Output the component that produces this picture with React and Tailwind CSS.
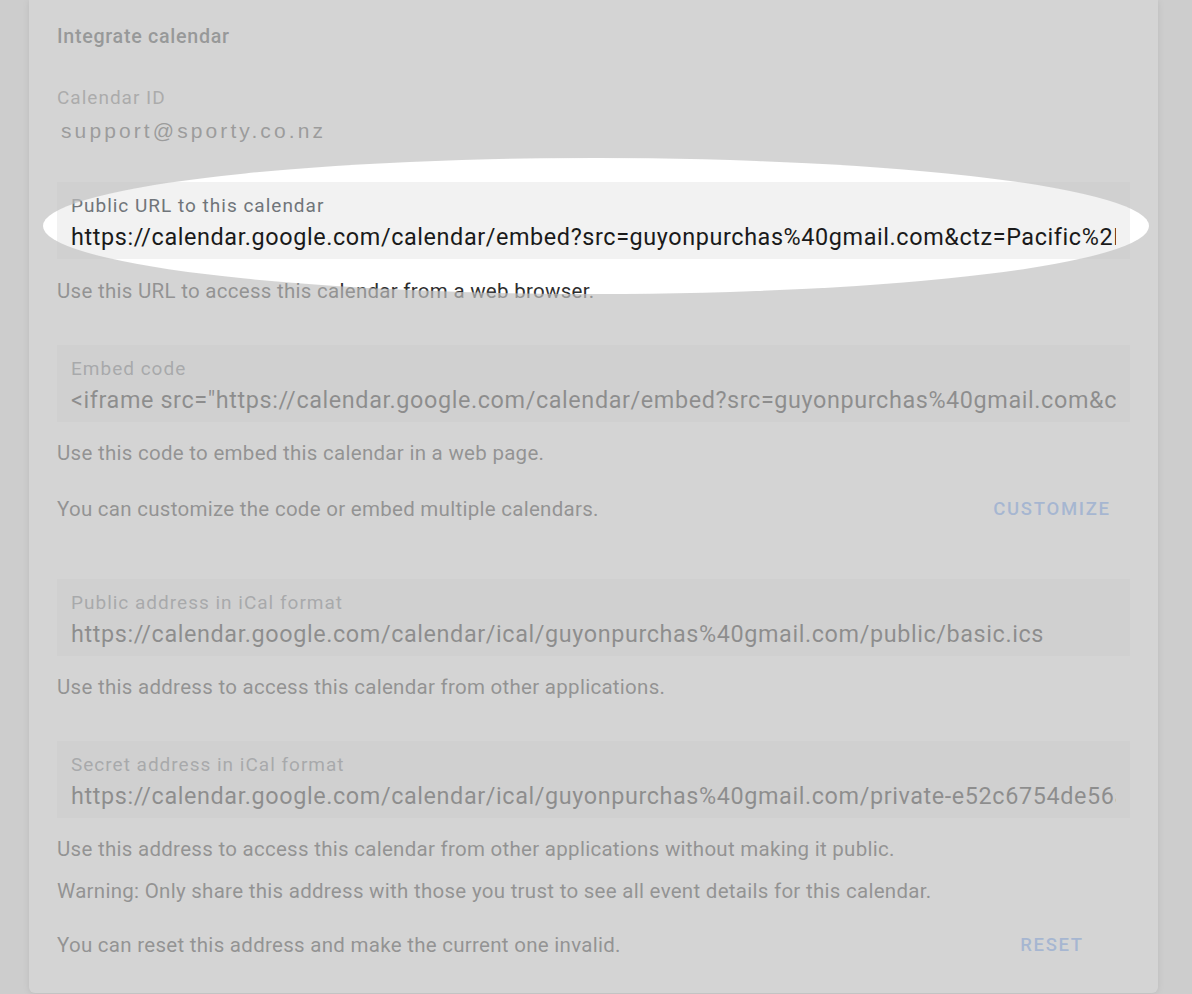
import React from 'react'

const fields = [
  {
    label: 'Public URL to this calendar',
    value: 'https://calendar.google.com/calendar/embed?src=guyonpurchas%40gmail.com&ctz=Pacific%2FAuckland',
  },
  {
    label: 'Embed code',
    value: '<iframe src="https://calendar.google.com/calendar/embed?src=guyonpurchas%40gmail.com&ctz=Pacific%2FAuckland" style="border: 0" width="800" height="600" frameborder="0" scrolling="no"></iframe>',
  },
  {
    label: 'Public address in iCal format',
    value: 'https://calendar.google.com/calendar/ical/guyonpurchas%40gmail.com/public/basic.ics',
  },
  {
    label: 'Secret address in iCal format',
    value: 'https://calendar.google.com/calendar/ical/guyonpurchas%40gmail.com/private-e52c6754de56a1b2c3d4/basic.ics',
  },
]

function Field({ field, className = '' }) {
  return (
    <div className={`h-[77px] bg-[#f2f2f2] px-[14px] pt-[12px] ${className}`}>
      <div className="text-[19px] leading-[24px] tracking-[1px] text-[#70757a]">{field.label}</div>
      <div className="mt-[4px] overflow-hidden whitespace-nowrap text-[23.4px] leading-[30px] tracking-[0.6px] text-[#1a1a1a]">
        {field.value}
      </div>
    </div>
  )
}

function Help({ children, className = '' }) {
  return <p className={`text-[20.5px] leading-[24px] tracking-[0.28px] text-[#2d2d2d] ${className}`}>{children}</p>
}

function ActionRow({ text, action, className = '' }) {
  return (
    <div className={`flex items-center justify-between ${className}`}>
      <Help>{text}</Help>
      <button className="w-[156px] text-center text-[18.5px] leading-[24px] font-medium tracking-[1.7px] text-[#6b9ff5]">
        {action}
      </button>
    </div>
  )
}

export default function App() {
  return (
    <div className="relative h-[994px] overflow-hidden bg-[#e8e8e8] font-['Roboto',sans-serif]">
      <div className="ml-[29px] h-[993px] w-[1129px] rounded-b-[6px] bg-white px-[28px] pt-[25px] shadow-[0_1px_6px_rgba(0,0,0,0.25)]">
        <h2 className="text-[19.7px] leading-[24px] font-medium tracking-[0.7px] text-[#3c4043]">Integrate calendar</h2>

        <div className="mt-[37px] text-[19px] leading-[24px] tracking-[1px] text-[#7c7c7c]">Calendar ID</div>
        <div className="mt-[7px] pl-[4px] font-['Liberation_Sans',sans-serif] text-[21px] leading-[28px] tracking-[3.1px] text-[#4a4a4a]">
          support@sporty.co.nz
        </div>

        <Field field={fields[0]} className="mt-[37px]" />
        <Help className="mt-[20px]">Use this URL to access this calendar from a web browser.</Help>

        <Field field={fields[1]} className="mt-[42px]" />
        <Help className="mt-[19px]">Use this code to embed this calendar in a web page.</Help>
        <ActionRow
          className="mt-[32px]"
          text="You can customize the code or embed multiple calendars."
          action="CUSTOMIZE"
        />

        <Field field={fields[2]} className="mt-[58px]" />
        <Help className="mt-[19px]">Use this address to access this calendar from other applications.</Help>

        <Field field={fields[3]} className="mt-[42px]" />
        <Help className="mt-[19px]">
          Use this address to access this calendar from other applications without making it public.
        </Help>
        <Help className="mt-[18px]">
          Warning: Only share this address with those you trust to see all event details for this calendar.
        </Help>
        <ActionRow
          className="mt-[30px]"
          text="You can reset this address and make the current one invalid."
          action="RESET"
        />
      </div>

      {/* spotlight on the public URL */}
      <div className="pointer-events-none absolute left-[43px] top-[158px] h-[136px] w-[1106px] rounded-[50%] shadow-[0_0_0_2400px_rgba(192,192,192,0.69)]" />
    </div>
  )
}
